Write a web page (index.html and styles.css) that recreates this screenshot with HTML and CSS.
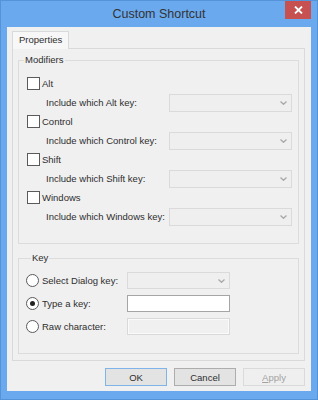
FILE: index.html
```html
<!DOCTYPE html>
<html lang="en">
<head>
    <meta charset="UTF-8">
    <title>Custom Shortcut</title>
    <link rel="stylesheet" href="styles.css">
</head>
<body>
    <div class="window">
        <div class="titlebar">
            <span></span>
            <div class="title">Custom Shortcut</div>
            <button class="close-btn" aria-label="Close">
                <svg width="9" height="8" viewBox="0 0 9 8"><path d="M1 0.5 L8 7.5 M8 0.5 L1 7.5" stroke="#fff" stroke-width="1.8"/></svg>
            </button>
        </div>

        <div class="client">
            <div class="tabs">
                <div class="tab active">Properties</div>
            </div>

            <div class="tab-panel">
                <fieldset class="group">
                    <legend>Modifiers</legend>

                    <div class="row check-row"><span class="checkbox"></span><label>Alt</label></div>
                    <div class="row sub-row">
                        <label>Include which Alt key:</label>
                        <div class="combo"><svg width="7" height="4" viewBox="0 0 7 4"><polyline points="0.5,0.5 3.5,3.3 6.5,0.5" fill="none" stroke="#a9a9a9" stroke-width="1.3"/></svg></div>
                    </div>

                    <div class="row check-row"><span class="checkbox"></span><label>Control</label></div>
                    <div class="row sub-row">
                        <label>Include which Control key:</label>
                        <div class="combo"><svg width="7" height="4" viewBox="0 0 7 4"><polyline points="0.5,0.5 3.5,3.3 6.5,0.5" fill="none" stroke="#a9a9a9" stroke-width="1.3"/></svg></div>
                    </div>

                    <div class="row check-row"><span class="checkbox"></span><label>Shift</label></div>
                    <div class="row sub-row">
                        <label>Include which Shift key:</label>
                        <div class="combo"><svg width="7" height="4" viewBox="0 0 7 4"><polyline points="0.5,0.5 3.5,3.3 6.5,0.5" fill="none" stroke="#a9a9a9" stroke-width="1.3"/></svg></div>
                    </div>

                    <div class="row check-row"><span class="checkbox"></span><label>Windows</label></div>
                    <div class="row sub-row">
                        <label>Include which Windows key:</label>
                        <div class="combo"><svg width="7" height="4" viewBox="0 0 7 4"><polyline points="0.5,0.5 3.5,3.3 6.5,0.5" fill="none" stroke="#a9a9a9" stroke-width="1.3"/></svg></div>
                    </div>
                </fieldset>

                <fieldset class="group key-group">
                    <legend>Key</legend>

                    <div class="key-row">
                        <span class="radio"></span>
                        <label>Select Dialog key:</label>
                        <div class="combo small"><svg width="7" height="4" viewBox="0 0 7 4"><polyline points="0.5,0.5 3.5,3.3 6.5,0.5" fill="none" stroke="#a9a9a9" stroke-width="1.3"/></svg></div>
                    </div>
                    <div class="key-row">
                        <span class="radio checked"></span>
                        <label>Type a key:</label>
                        <div class="field text-field"></div>
                    </div>
                    <div class="key-row">
                        <span class="radio"></span>
                        <label>Raw character:</label>
                        <div class="field disabled-field"></div>
                    </div>
                </fieldset>
            </div>

            <div class="buttons">
                <button class="btn ok-btn">OK</button>
                <button class="btn">Cancel</button>
                <button class="btn apply-btn"><u>A</u>pply</button>
            </div>
        </div>
    </div>
</body>
</html>
```

FILE: styles.css
```css
* {
    box-sizing: border-box;
}
body {
    margin: 0;
    font-family: "Liberation Sans", Arial, sans-serif;
    font-size: 9.5px;
    color: #2e2e2e;
}
.window {
    width: 318px;
    height: 400px;
    background: #6aa9ee;
    border: 1px solid #5592d8;
    display: flex;
    flex-direction: column;
}
.titlebar {
    height: 26px;
    display: grid;
    grid-template-columns: 1fr auto 1fr;
    align-items: center;
}
.title {
    font-size: 12.5px;
    color: #333;
}
.close-btn {
    justify-self: end;
    align-self: start;
    width: 26px;
    height: 18px;
    margin-right: 6px;
    padding: 0;
    border: none;
    background: #c75050;
    display: flex;
    align-items: center;
    justify-content: center;
}
.client {
    flex: 1;
    margin: 0 6px 8px;
    background: #f0f0f0;
    padding: 4px 6px 0 5px;
}
.tabs {
    display: flex;
}
.tab {
    height: 18px;
    line-height: 16px;
    padding: 0 6px;
    border: 1px solid #d9d9d9;
    border-bottom: none;
    margin-bottom: -1px;
    background: #f7f7f7;
    position: relative;
}
.tab-panel {
    border: 1px solid #d9d9d9;
    padding: 0 5px 6px;
}
.group {
    margin: 5px 0 0;
    padding: 8px 6px 17px 0;
    border: 1px solid #dcdcdc;
    min-width: 0;
}
.group legend {
    padding: 0 1px;
    margin-left: 5px;
    line-height: 12px;
}
.row {
    height: 19px;
    display: flex;
    align-items: center;
}
.check-row {
    padding-left: 8px;
}
.check-row label {
    margin-left: 2px;
}
.sub-row {
    padding-left: 27px;
    justify-content: space-between;
}
.checkbox {
    width: 13px;
    height: 13px;
    border: 1px solid #5a5a5a;
    background: #fff;
}
.combo {
    width: 123px;
    height: 18px;
    border: 1px solid #dadada;
    background: #efefef;
    display: flex;
    align-items: center;
    justify-content: flex-end;
    padding-right: 4px;
}
.combo.small {
    width: 103px;
    height: 17px;
}
.key-group {
    margin-top: 8px;
    padding: 5px 0 15px 7px;
}
.key-row {
    height: 23px;
    display: grid;
    grid-template-columns: 13px 88px 103px;
    align-items: center;
}
.key-row label {
    padding-left: 3px;
}
.radio {
    width: 13px;
    height: 13px;
    border: 1px solid #5a5a5a;
    border-radius: 50%;
    background: #fff;
    display: flex;
    align-items: center;
    justify-content: center;
}
.radio.checked::after {
    content: "";
    width: 5px;
    height: 5px;
    border-radius: 50%;
    background: #222;
}
.field {
    height: 17px;
}
.text-field {
    background: #fff;
    border: 1px solid #a5a5a5;
}
.disabled-field {
    background: #f0f0f0;
    border: 1px solid #d9d9d9;
    box-shadow: inset 0 0 0 1px #fafafa;
}
.buttons {
    display: flex;
    justify-content: flex-end;
    gap: 7px;
    margin-top: 7px;
}
.btn {
    width: 62px;
    height: 18px;
    padding: 0;
    font-family: inherit;
    font-size: 9.5px;
    color: #2e2e2e;
    background: #e3e3e3;
    border: 1px solid #adadad;
}
.ok-btn {
    border-color: #7eb4ea;
}
.apply-btn {
    color: #a3a3a3;
    background: #efefef;
    border-color: #dadada;
}
```
